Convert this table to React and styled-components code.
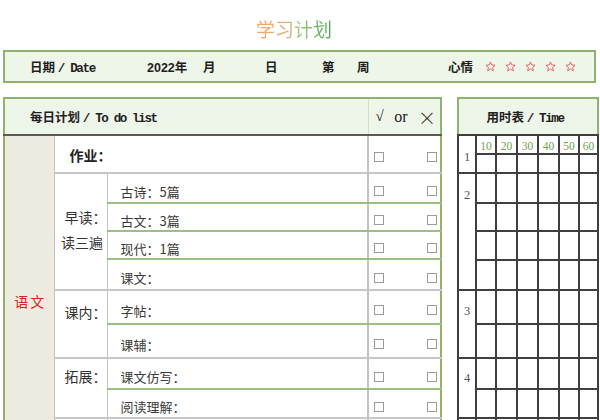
import React from 'react';
import styled, { createGlobalStyle } from 'styled-components';

const GREEN = '#8fb36f';
const GREEN_LINE = '#9cc083';
const GRAY_LINE = '#c6c6c6';
const HEAD_BG = '#eef6e9';
const GRID = '#3f3f3f';

const GlobalStyle = createGlobalStyle`
  html, body { margin: 0; padding: 0; background: #fff; }
  body {
    font-family: "Noto Sans CJK SC", "Liberation Sans", sans-serif;
    color: #333;
  }
`;

const Page = styled.div`
  width: 593px;
  padding-left: 3px;
`;

const Title = styled.h1`
  margin: 0;
  height: 50px;
  box-sizing: border-box;
  padding: 17px 11px 0 0;
  text-align: center;
  font-size: 19px;
  line-height: 24px;
  font-weight: 400;
`;

const TitleText = styled.span`
  background: linear-gradient(90deg, #f3a468 0%, #e6b07a 38%, #a2c67f 58%, #4ea85a 100%);
  -webkit-background-clip: text;
  background-clip: text;
  color: transparent;
`;

const DateBar = styled.div`
  display: grid;
  grid-template-columns: 117px 56px 62px 57px 35px 91px 37px auto;
  align-items: center;
  height: 33px;
  box-sizing: border-box;
  border: 2px solid ${GREEN};
  background: ${HEAD_BG};
  padding-left: 25px;
  font-weight: 700;
  font-size: 12.5px;
  color: #1e1e1e;
`;

const Latin = styled.span`
  font-family: "Liberation Mono", monospace;
  font-size: 12.6px;
  letter-spacing: -1.4px;
  font-weight: ${p => (p.$bold ? 700 : 400)};
`;

const Year = styled.span`
  font-family: "Liberation Sans", sans-serif;
  font-size: 12.5px;
  font-weight: 700;
`;

const Stars = styled.div`
  display: flex;
  gap: 9px;
  align-items: center;
`;

const Star = () => (
  <svg width="11" height="11" viewBox="0 0 24 24">
    <polygon
      points="12,2 14.9,8.6 22,9.3 16.6,14.2 18.2,21.5 12,17.6 5.8,21.5 7.4,14.2 2,9.3 9.1,8.6"
      fill="none"
      stroke="#e25a5a"
      strokeWidth="2"
      strokeLinejoin="round"
    />
  </svg>
);

const Tables = styled.div`
  display: flex;
  gap: 15px;
  margin-top: 14px;
  align-items: flex-start;
`;

const PlanTable = styled.table`
  width: 437px;
  border-collapse: collapse;
  table-layout: fixed;
  border: 2px solid ${GREEN};
`;

const TimeTable = styled.table`
  width: 140px;
  border-collapse: collapse;
  table-layout: fixed;
`;

const Row = styled.tr`
  height: ${p => p.$h}px;
`;

const PlanHead = styled.th`
  background: ${HEAD_BG};
  border-bottom: 2px solid #5a5a5a;
  border-right: 1px solid #cfe2c4;
  text-align: left;
  padding: 0 0 0 25px;
  font-size: 12.5px;
  font-weight: 700;
  color: #222;
`;

const CheckHead = styled.th`
  background: ${HEAD_BG};
  border-bottom: 2px solid #5a5a5a;
  padding: 0 4px 0 7px;
  font-weight: 400;
`;

const CheckHeadInner = styled.div`
  display: flex;
  justify-content: space-between;
  align-items: center;
  font-family: "Liberation Serif", serif;
  font-size: 16px;
  color: #222;
`;

const Sym = styled.span`
  font-family: ${p => p.$font || '"Liberation Serif", serif'};
  font-size: ${p => p.$size || 16}px;
  font-weight: ${p => p.$weight || 400};
`;

const SubjectCell = styled.td`
  background: #edebe0;
  border-right: 1px solid ${GRAY_LINE};
  text-align: center;
  vertical-align: middle;
  color: #e0201c;
  font-size: 14px;
  letter-spacing: 2px;
  padding: 0 0 0 2px;
`;

const HomeworkCell = styled.td`
  border-bottom: 2px solid ${GRAY_LINE};
  padding: 2px 0 0 15px;
  font-size: 14px;
  font-weight: 700;
  color: #222;
`;

const CatCell = styled.td`
  border-bottom: 2px solid ${GRAY_LINE};
  border-right: 1px solid ${GRAY_LINE};
  vertical-align: top;
  text-align: center;
  padding: ${p => p.$top}px 0 0 3px;
  font-size: 14px;
  line-height: 25px;
  color: #333;
  font-feature-settings: "halt";
`;

const ItemCell = styled.td`
  border-bottom: 2px solid ${p => (p.$line === 'green' ? GREEN_LINE : GRAY_LINE)};
  padding: 6px 0 0 13px;
  font-size: 13px;
  color: #3a3a3a;
`;

const CheckCell = styled.td`
  border-left: 2px solid #c2c2c2;
  border-bottom: 2px solid ${p => (p.$line === 'green' ? GREEN_LINE : GRAY_LINE)};
  padding: 6px 3px 0 5px;
`;

const CheckPair = styled.div`
  display: flex;
  justify-content: space-between;
  align-items: center;
`;

const Box = styled.span`
  display: block;
  width: 10px;
  height: 10px;
  box-sizing: border-box;
  border: 1px solid #9b9b9b;
  background: #fff;
`;

const TimeHead = styled.th`
  background: ${HEAD_BG};
  border-top: 2px solid ${GREEN};
  border-left: 2px solid ${GREEN};
  border-right: 2px solid ${GREEN};
  border-bottom: 2px solid ${GRID};
  font-size: 12.5px;
  font-weight: 700;
  color: #222;
  padding: 0 6px 0 0;
`;

const GroupLabel = styled.td`
  border: 2px solid ${GRID};
  vertical-align: top;
  text-align: center;
  padding: ${p => p.$top}px 0 0;
  font-family: "Liberation Serif", serif;
  font-size: 12.5px;
  line-height: 14px;
  color: #555;
`;

const Slot = styled.td`
  border: 2px solid ${GRID};
  padding: 0;
`;

const Minute = styled.td`
  border: 2px solid ${GRID};
  padding: 3px 0 0;
  text-align: center;
  font-family: "Liberation Serif", serif;
  font-size: 11.5px;
  color: #6f9f4c;
`;

const Checks = ({ line }) => (
  <CheckCell $line={line}>
    <CheckPair>
      <Box />
      <Box />
    </CheckPair>
  </CheckCell>
);

const planRows = [
  { h: 30, item: '古诗：5篇', line: 'green' },
  { h: 28, item: '古文：3篇', line: 'green' },
  { h: 28, item: '现代：1篇', line: 'green' },
  { h: 31, item: '课文：', line: 'gray' },
  { h: 34, item: '字帖：', line: 'green' },
  { h: 34, item: '课辅：', line: 'gray' },
  { h: 31, item: '课文仿写：', line: 'green' },
  { h: 29, item: '阅读理解：', line: 'gray' },
  { h: 49, item: '', line: 'gray' },
];

const categories = {
  0: { span: 4, top: 31, lines: ['早读：', '读三遍'] },
  4: { span: 2, top: 9, lines: ['课内：'] },
  6: { span: 2, top: 5, lines: ['拓展：'] },
  8: { span: 1, top: 5, lines: [''] },
};

const timeGroups = [
  { label: '1', top: 14, rows: [19, 19], minutes: true },
  { label: '2', top: 14, rows: [30, 28, 29, 30] },
  { label: '3', top: 13, rows: [34, 34] },
  { label: '4', top: 12, rows: [31, 29] },
  { label: '', top: 12, rows: [49] },
];

const minuteMarks = ['10', '20', '30', '40', '50', '60'];

export default function App() {
  return (
    <>
      <GlobalStyle />
      <Page>
        <Title>
          <TitleText>学习计划</TitleText>
        </Title>
        <DateBar>
          <span>日期 <Latin $bold>/ Date</Latin></span>
          <span><Year>2022</Year>年</span>
          <span>月</span>
          <span>日</span>
          <span>第</span>
          <span>周</span>
          <span>心情</span>
          <Stars>
            <Star /><Star /><Star /><Star /><Star />
          </Stars>
        </DateBar>
        <Tables>
          <PlanTable>
            <colgroup>
              <col style={{ width: 50 }} />
              <col style={{ width: 53 }} />
              <col style={{ width: 261 }} />
              <col style={{ width: 73 }} />
            </colgroup>
            <tbody>
              <Row $h={37}>
                <PlanHead colSpan={3}>
                  每日计划 <Latin $bold>/ To do list</Latin>
                </PlanHead>
                <CheckHead>
                  <CheckHeadInner>
                    <Sym $size={15} $weight={700}>√</Sym>
                    <Sym $size={16}>or</Sym>
                    <Sym $size={18} $weight={300} $font={'"Noto Sans CJK SC", sans-serif'}>×</Sym>
                  </CheckHeadInner>
                </CheckHead>
              </Row>
              <Row $h={38}>
                <SubjectCell rowSpan={planRows.length + 1}>语文</SubjectCell>
                <HomeworkCell colSpan={2}>作业：</HomeworkCell>
                <Checks line="gray" />
              </Row>
              {planRows.map((r, i) => {
                const cat = categories[i];
                return (
                  <Row $h={r.h} key={i}>
                    {cat && (
                      <CatCell rowSpan={cat.span} $top={cat.top}>
                        {cat.lines.map((l, j) => (
                          <div key={j}>{l}</div>
                        ))}
                      </CatCell>
                    )}
                    <ItemCell $line={r.line}>{r.item}</ItemCell>
                    <Checks line={r.line} />
                  </Row>
                );
              })}
            </tbody>
          </PlanTable>

          <TimeTable>
            <colgroup>
              <col style={{ width: 18 }} />
              <col style={{ width: 20 }} />
              <col style={{ width: 21 }} />
              <col style={{ width: 21 }} />
              <col style={{ width: 21 }} />
              <col style={{ width: 20 }} />
              <col style={{ width: 19 }} />
            </colgroup>
            <tbody>
              <Row $h={37}>
                <TimeHead colSpan={7}>
                  用时表 <Latin $bold>/ Time</Latin>
                </TimeHead>
              </Row>
              {timeGroups.map((g, gi) =>
                g.rows.map((h, ri) => (
                  <Row $h={h} key={gi + '-' + ri}>
                    {ri === 0 && (
                      <GroupLabel rowSpan={g.rows.length} $top={g.top}>
                        {g.label}
                      </GroupLabel>
                    )}
                    {g.minutes && ri === 0
                      ? minuteMarks.map(m => <Minute key={m}>{m}</Minute>)
                      : minuteMarks.map(m => <Slot key={m} />)}
                  </Row>
                ))
              )}
            </tbody>
          </TimeTable>
        </Tables>
      </Page>
    </>
  );
}
